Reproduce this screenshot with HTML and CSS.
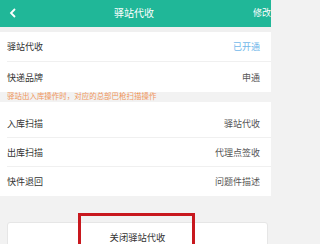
FILE: index.html
```html
<!DOCTYPE html>
<html>
<head>
<meta charset="utf-8">
<link rel="stylesheet" href="styles.css">
</head>
<body>
<div class="page">
  <header class="nav">
    <svg class="back" width="8" height="10" viewBox="0 0 8 10"><path d="M6 1 L2 5 L6 9" fill="none" stroke="#fff" stroke-width="1.8"/></svg>
    <div class="title">驿站代收</div>
    <div class="edit">修改</div>
  </header>
  <div class="spacer"></div>
  <section class="group">
    <div class="row"><span class="label">驿站代收</span><span class="value blue">已开通</span></div>
    <div class="row"><span class="label">快递品牌</span><span class="value">申通</span></div>
  </section>
  <div class="notice"><span class="notice-text">驿站出入库操作时，对应的总部巴枪扫描操作</span></div>
  <section class="group group2">
    <div class="row"><span class="label">入库扫描</span><span class="value">驿站代收</span></div>
    <div class="row"><span class="label">出库扫描</span><span class="value">代理点签收</span></div>
    <div class="row"><span class="label">快件退回</span><span class="value">问题件描述</span></div>
  </section>
  <div class="bottom">
    <div class="card">
      <div class="close">关闭驿站代收</div>
    </div>
    <div class="highlight"></div>
  </div>
</div>
</body>
</html>
```
FILE: styles.css
```css
html, body {
  margin: 0;
  padding: 0;
  background: #f2f2f2;
}
body {
  font-family: "Noto Sans CJK SC", "Noto Sans", sans-serif;
  width: 271px;
  height: 244px;
  overflow: hidden;
}
.page {
  display: flex;
  flex-direction: column;
  height: 244px;
  overflow: hidden;
}
.nav {
  height: 27px;
  flex: none;
  background: #20b798;
  display: flex;
  align-items: center;
  color: #fff;
}
.back {
  margin-left: 9px;
  margin-top: -1px;
}
.title {
  flex: 1;
  text-align: center;
  font-size: 10px;
  margin-left: -2px;
  margin-top: -2px;
}
.edit {
  font-size: 9px;
  width: 18px;
  overflow: hidden;
  white-space: nowrap;
  margin-top: -2px;
}
.spacer {
  height: 5px;
  flex: none;
  background: #f0f0f0;
}
.group {
  background: #fff;
  padding-left: 7px;
  flex: none;
}
.group2 {
  padding-top: 7px;
}
.row {
  height: 30px;
  display: flex;
  align-items: center;
  justify-content: space-between;
  padding-right: 11px;
  font-size: 9px;
  color: #333;
  border-bottom: 1px solid #f0f0f0;
  box-sizing: border-box;
}
.group2 .row {
  height: 29px;
}
.row:last-child {
  border-bottom: none;
}
.value {
  color: #555;
}
.value.blue {
  color: #72b8ea;
}
.notice {
  height: 10px;
  flex: none;
  display: flex;
  align-items: center;
  padding-left: 7px;
  background: #f2f2f2;
  overflow: hidden;
}
.notice-text {
  font-size: 9px;
  line-height: 10px;
  color: #f0955a;
  white-space: nowrap;
  transform: scale(0.83);
  transform-origin: left center;
}
.bottom {
  position: relative;
  flex: 1;
  padding: 26px 3px 0 7px;
  overflow: hidden;
}
.card {
  background: #fff;
  border: 1px solid #e6e6e6;
  border-radius: 3px;
  height: 40px;
  display: flex;
  justify-content: center;
}
.close {
  font-size: 9.3px;
  color: #333;
  margin-top: 7px;
}
.highlight {
  position: absolute;
  left: 78px;
  top: 17px;
  width: 111px;
  height: 60px;
  border: 3px solid #c8181e;
}
```
